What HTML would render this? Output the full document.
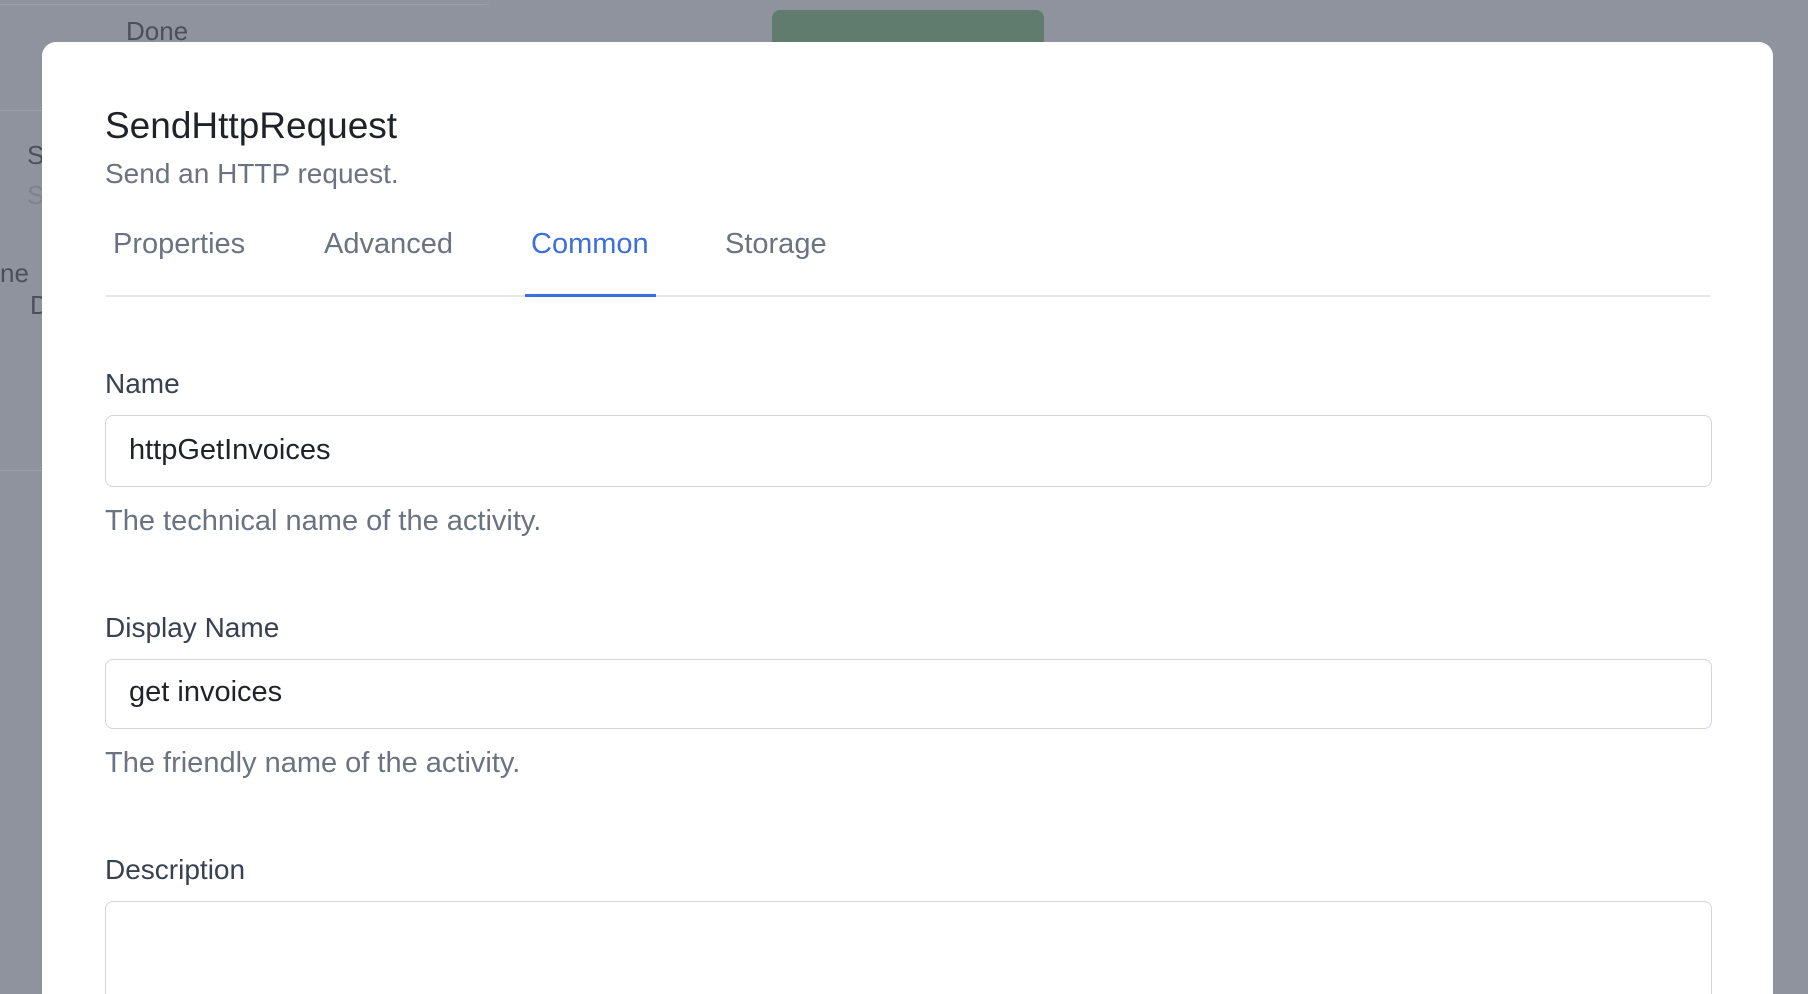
<!DOCTYPE html>
<html><head><meta charset="utf-8"><style>
html,body{margin:0;padding:0;width:1808px;height:994px;overflow:hidden;background:#8f939e;font-family:"Liberation Sans",sans-serif;position:relative;}
.bg{position:absolute;}
.modal{position:absolute;left:42px;top:42px;width:1731px;height:952px;background:#fff;border-radius:14px 14px 0 0;overflow:hidden;}
.abs{position:absolute;white-space:nowrap;}
.title{left:63px;top:63px;font-size:37px;color:#1f2328;}
.sub{left:63px;top:116px;font-size:28px;color:#6b7280;}
.tab{top:186px;font-size:29px;color:#6b7280;}
.line{left:63px;width:1606px;top:253px;height:2px;background:#e5e7eb;}
.ul{left:483px;width:131px;top:252px;height:3px;background:#3b6fe0;}
.label{left:63px;font-size:28px;color:#374151;}
.input{left:63px;width:1607px;border:1px solid #d1d5db;border-radius:8px;background:#fff;box-sizing:border-box;}
.itext{left:87px;font-size:29px;color:#1f2328;}
.help{left:63px;font-size:29px;color:#6b7280;}
</style></head><body>
<div class="bg" style="left:0;top:0;width:490px;height:4px;border-bottom:1px solid #9da1ab;border-radius:0 0 10px 0"></div>
<div class="bg" style="left:772px;top:10px;width:272px;height:40px;background:#5f7c6e;border-radius:8px"></div>
<div class="bg abs" style="left:126px;top:16px;font-size:26px;color:#4b505a">Done</div>
<div class="bg" style="left:0;top:110px;width:42px;height:1px;background:#9da1ab"></div>
<div class="bg abs" style="left:27px;top:140px;font-size:26px;color:#4b505a">S</div>
<div class="bg abs" style="left:27px;top:180px;font-size:26px;color:#80848e">S</div>
<div class="bg abs" style="left:0;top:258px;font-size:26px;color:#4b505a">ne</div>
<div class="bg abs" style="left:30px;top:290px;font-size:26px;color:#4b505a">D</div>
<div class="bg" style="left:0;top:470px;width:42px;height:1px;background:#9da1ab"></div>
<div class="modal">
  <div class="abs title">SendHttpRequest</div>
  <div class="abs sub">Send an HTTP request.</div>
  <div class="abs tab" style="left:71px">Properties</div>
  <div class="abs tab" style="left:282px">Advanced</div>
  <div class="abs tab" style="left:489px;color:#3b6fe0">Common</div>
  <div class="abs tab" style="left:683px">Storage</div>
  <div class="abs line"></div>
  <div class="abs ul"></div>
  <div class="abs label" style="top:326px">Name</div>
  <div class="abs input" style="top:373px;height:72px"></div>
  <div class="abs itext" style="top:392px">httpGetInvoices</div>
  <div class="abs help" style="top:463px">The technical name of the activity.</div>
  <div class="abs label" style="top:570px">Display Name</div>
  <div class="abs input" style="top:617px;height:70px"></div>
  <div class="abs itext" style="top:634px">get invoices</div>
  <div class="abs help" style="top:705px">The friendly name of the activity.</div>
  <div class="abs label" style="top:812px">Description</div>
  <div class="abs input" style="top:859px;height:93px;border-bottom:none;border-radius:8px 8px 0 0"></div>
</div>
</body></html>
